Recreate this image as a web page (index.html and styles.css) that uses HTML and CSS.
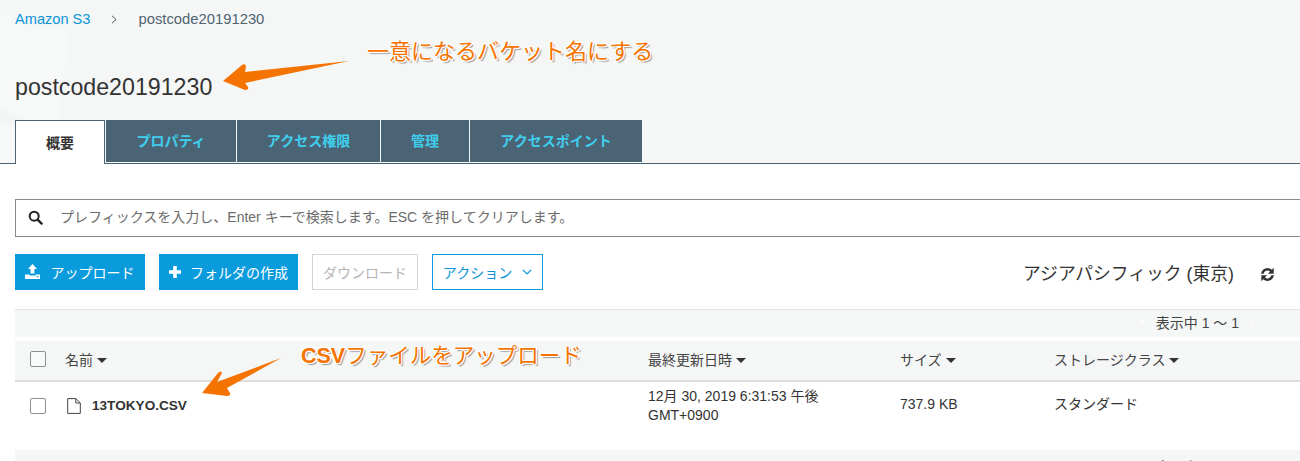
FILE: index.html
```html
<!DOCTYPE html>
<html lang="ja">
<head>
<meta charset="utf-8">
<title>postcode20191230</title>
<link rel="stylesheet" href="styles.css">
</head>
<body>
<header class="head">
  <svg class="watermark" width="110" height="163" viewBox="0 0 110 163"><path d="M0 8 C30 34 60 34 70 22 L58 140 L30 163 L0 163 Z" fill="#f7f8f8"/><path d="M0 108 L70 138 L70 150 L0 122 Z" fill="#f3f5f5"/></svg>
  <nav class="crumbs"><a class="crumb-link">Amazon S3</a><svg class="crumb-sep" width="6" height="9" viewBox="0 0 6 9"><path d="M1 .8 L5 4.5 L1 8.2" fill="none" stroke="#555" stroke-width="1"/></svg><span class="crumb-current">postcode20191230</span></nav>
  <h1 class="title">postcode20191230</h1>
  <div class="tabs">
    <div class="tab active t1">概要</div>
    <div class="tab t2">プロパティ</div>
    <div class="tab t3">アクセス権限</div>
    <div class="tab t4">管理</div>
    <div class="tab t5">アクセスポイント</div>
  </div>
</header>
<main class="main">
  <div class="search">
    <svg width="15" height="15" viewBox="0 0 15 15"><circle cx="6.2" cy="6.2" r="4.5" fill="none" stroke="#222" stroke-width="2"/><path d="M9.6 9.6 L13.6 13.6" stroke="#222" stroke-width="2.4" stroke-linecap="round"/></svg>
    <span class="placeholder">プレフィックスを入力し、Enter キーで検索します。ESC を押してクリアします。</span>
  </div>
  <div class="toolbar">
    <button class="btn primary upload"><svg width="15" height="15" viewBox="0 0 15 15"><path d="M7.5 0 L12 5 H9.4 V9.6 H5.6 V5 H3 Z" fill="#fff"/><path d="M0 10.4 H4.4 V11.4 H10.6 V10.4 H15 V15 H0 Z" fill="#fff"/><path d="M11.5 12.6 H13.6" stroke="#0a9bdc" stroke-width="1"/></svg>アップロード</button>
    <button class="btn primary folder"><svg width="12" height="12" viewBox="0 0 12 12"><path d="M4.2 0 H7.8 V4.2 H12 V7.8 H7.8 V12 H4.2 V7.8 H0 V4.2 H4.2 Z" fill="#fff"/></svg>フォルダの作成</button>
    <button class="btn disabled">ダウンロード</button>
    <button class="btn outline">アクション<svg width="10" height="6" viewBox="0 0 10 6"><path d="M1 1 L5 5 L9 1" fill="none" stroke="#0a9bdc" stroke-width="1.2"/></svg></button>
    <div class="region">アジアパシフィック (東京)</div>
    <svg class="refresh" width="15" height="15" viewBox="0 0 14 14"><path d="M1 6.2 A6 6 0 0 1 11 2.6 L12.8 .8 V6.2 H7.4 L9.4 4.2 A3.6 3.6 0 0 0 3.4 6.2 Z M13 7.8 A6 6 0 0 1 3 11.4 L1.2 13.2 V7.8 H6.6 L4.6 9.8 A3.6 3.6 0 0 0 10.6 7.8 Z" fill="#333"/></svg>
  </div>
  <div class="pager">
    <svg width="6" height="10" viewBox="0 0 6 10"><path d="M5 1 L1 5 L5 9" fill="none" stroke="#fff" stroke-width="1.2"/></svg>
    <span>表示中 1 〜 1</span>
    <svg width="6" height="10" viewBox="0 0 6 10"><path d="M1 1 L5 5 L1 9" fill="none" stroke="#fff" stroke-width="1.2"/></svg>
  </div>
  <div class="thead">
    <div class="c-check"><span class="box"></span></div>
    <div class="c-name">名前<i class="caret"></i></div>
    <div class="c-date">最終更新日時<i class="caret"></i></div>
    <div class="c-size">サイズ<i class="caret"></i></div>
    <div class="c-class">ストレージクラス<i class="caret"></i></div>
  </div>
  <div class="trow">
    <div class="c-check low"><span class="box"></span></div>
    <div class="c-name file low"><svg width="14" height="16" viewBox="0 0 14 16"><path d="M.7 .6 H8.8 L13.3 5 V15.4 H.7 Z M8.8 .6 V5 H13.3" fill="none" stroke="#444" stroke-width="1"/></svg><b>13TOKYO.CSV</b></div>
    <div class="c-date low">12月 30, 2019 6:31:53 午後<br>GMT+0900</div>
    <div class="c-size">737.9 KB</div>
    <div class="c-class">スタンダード</div>
  </div>
  <div class="pager bottom"><span>表示中 1 〜 1</span></div>
</main>
<div class="note note-bucket">一意になるバケット名にする</div>
<div class="note note-csv"><b>CSV</b>ファイルをアップロード</div>
<svg class="arrow arrow-a" width="132" height="36" viewBox="0 0 132 36"><path d="M127 1 L23 12 L24 6 Q23 3 20 5 L1 21 L23 30 Q27 30 26 27 L23 23 Z" fill="#f57300"/></svg>
<svg class="arrow arrow-b" width="84" height="40" viewBox="0 0 84 40"><path d="M79 0 L15 24 L20 15 Q19 12 16 15 L0 35 L25 38 Q29 38 28 35 L25 30 Z" fill="#f57300"/></svg>
</body>
</html>
```
FILE: styles.css
```css
* { box-sizing: border-box; }
html, body { margin: 0; height: 461px; overflow: hidden; }
body { position: relative; background: #fff; color: #333; font-family: "Liberation Sans", "Noto Sans CJK JP", sans-serif; font-size: 14px; }
.head { position: relative; height: 164px; background: #f5f7f7; border-bottom: 1px solid #4b6475; padding: 0 0 0 15px; }
.watermark { position: absolute; left: 0; top: 0; }
.crumbs { position: relative; display: flex; align-items: center; height: 38px; font-size: 14.6px; color: #50636f; }
.crumb-link { color: #0a94d6; }
.crumb-sep { margin: 0 21px 0 21px; }
.crumb-current { font-size: 14.8px; }
.title { position: relative; margin: 30px 0 0; height: 52px; font-size: 23.2px; line-height: 39px; font-weight: 400; color: #333; }
.tabs { position: relative; display: flex; height: 43px; }
.tab { display: flex; align-items: center; justify-content: center; height: 42px; margin-right: 1px; padding-bottom: 2px; background: #4b6475; color: #3fcfee; font-size: 14px; font-weight: 700; }
.tab.active { height: 44px; background: #fff; color: #333; border: 1px solid #4b6475; border-bottom: 0; }
.t1 { width: 90px; } .t2 { width: 130px; } .t3 { width: 143px; } .t4 { width: 88px; } .t5 { width: 172px; }
.main { padding-left: 15px; }
.search { display: flex; align-items: center; gap: 17px; height: 38px; margin-top: 35px; margin-right: -5px; padding: 0 0 1px 12px; border: 1px solid #8a8a8a; background: #fff; }
.placeholder { color: #6b6b6b; font-size: 14px; line-height: 20px; padding-bottom: 1px; }
.toolbar { display: flex; align-items: center; margin-top: 17px; height: 36px; gap: 14px; }
.btn { display: flex; align-items: center; justify-content: center; height: 36px; padding: 0 0 1px; border: 1px solid transparent; background: none; font: inherit; font-size: 14px; }
.primary { background: #0a9bdc; color: #fff; }
.upload { width: 130px; gap: 11px; padding-right: 1px; }
.folder { width: 139px; gap: 9px; }
.disabled { width: 106px; background: #fff; border-color: #d5d5d5; color: #b5b5b5; }
.outline { width: 111px; gap: 10px; background: #fff; border-color: #0a9bdc; color: #0a94d6; }
.region { margin-left: auto; font-size: 17.8px; color: #333; }
.refresh { margin: 4px 25px 0 12px; }
.pager { display: flex; align-items: center; justify-content: flex-end; gap: 10px; height: 28px; margin-top: 19px; padding: 0 45px 3px 0; background: #f5f7f7; border-top: 1px solid #e3e5e5; font-size: 14px; color: #444; }
.thead, .trow { display: grid; grid-template-columns: 50px 583px 252px 154px 1fr; }
.thead { align-items: center; height: 41px; margin-top: 4px; padding-bottom: 3px; background: #f5f7f7; border-bottom: 2px solid #dcdede; font-size: 14px; color: #444; }
.trow { align-items: center; height: 68px; padding-bottom: 23px; color: #333; line-height: 19px; font-size: 14px; }
.low { margin-top: 2px; }
.c-check { display: flex; padding-left: 15px; }
.box { width: 16px; height: 16px; border: 1px solid #8a8f93; border-radius: 2px; background: #fff; }
.thead .box { background: #f9fafa; }
.caret { display: inline-block; margin-left: 4px; vertical-align: 2px; border-left: 5px solid transparent; border-right: 5px solid transparent; border-top: 5px solid #333; }
.file { display: flex; align-items: center; gap: 11px; padding-left: 2px; }
.file b { font-size: 13.6px; color: #333; }
.bottom { margin-top: 0; border-top: 0; height: 11px; align-items: flex-start; padding: 6px 61px 0 0; overflow: hidden; }
.note { position: absolute; color: #f57300; line-height: 24px; white-space: nowrap; text-shadow: -1px -1px 0 #fff, 1px -1px 0 #fff, -1px 1px 0 #fff, 1px 1px 0 #fff, 2px 2px 1px #999; }
.note-bucket { left: 367px; top: 40px; font-size: 22px; }
.note-csv { left: 301px; top: 344px; font-size: 21.5px; }
.arrow { position: absolute; }
.arrow-a { left: 222px; top: 60px; }
.arrow-b { left: 202px; top: 358px; }
```
